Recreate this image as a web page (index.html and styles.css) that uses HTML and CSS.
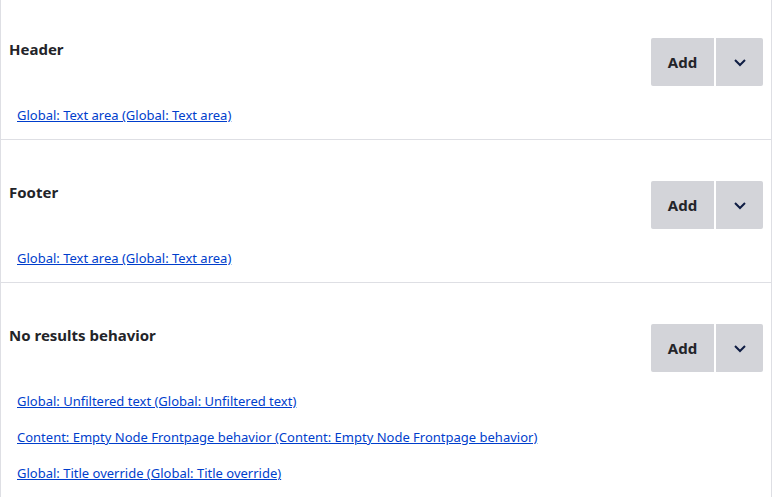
FILE: index.html
```html
<!DOCTYPE html>
<html>
<head>
<meta charset="utf-8">
<link rel="stylesheet" href="styles.css">
</head>
<body>
<div class="panel">
  <section class="sect">
    <div class="sect-head">
      <h3 class="sect-title">Header</h3>
      <div class="dropbutton">
        <button class="db-main">Add</button>
        <button class="db-toggle" aria-label="More"><svg width="14" height="9" viewBox="0 0 14 9"><path d="M2 2 L7 7 L12 2" fill="none" stroke="#0f1d44" stroke-width="2"/></svg></button>
      </div>
    </div>
    <ul class="items">
      <li><a href="#">Global: Text area (Global: Text area)</a></li>
    </ul>
  </section>
  <section class="sect">
    <div class="sect-head">
      <h3 class="sect-title">Footer</h3>
      <div class="dropbutton">
        <button class="db-main">Add</button>
        <button class="db-toggle" aria-label="More"><svg width="14" height="9" viewBox="0 0 14 9"><path d="M2 2 L7 7 L12 2" fill="none" stroke="#0f1d44" stroke-width="2"/></svg></button>
      </div>
    </div>
    <ul class="items">
      <li><a href="#">Global: Text area (Global: Text area)</a></li>
    </ul>
  </section>
  <section class="sect">
    <div class="sect-head">
      <h3 class="sect-title">No results behavior</h3>
      <div class="dropbutton">
        <button class="db-main">Add</button>
        <button class="db-toggle" aria-label="More"><svg width="14" height="9" viewBox="0 0 14 9"><path d="M2 2 L7 7 L12 2" fill="none" stroke="#0f1d44" stroke-width="2"/></svg></button>
      </div>
    </div>
    <ul class="items">
      <li><a href="#">Global: Unfiltered text (Global: Unfiltered text)</a></li>
      <li><a href="#">Content: Empty Node Frontpage behavior (Content: Empty Node Frontpage behavior)</a></li>
      <li><a href="#">Global: Title override (Global: Title override)</a></li>
    </ul>
  </section>
</div>
</body>
</html>
```
FILE: styles.css
```css
html, body {
  margin: 0;
  padding: 0;
  background: #fff;
}
body {
  font-family: "Noto Sans", "Open Sans", sans-serif;
  color: #232429;
  overflow: hidden;
}
.panel {
  margin-top: -3px;
  border-left: 1px solid #dedfe4;
  border-right: 1px solid #dedfe4;
}
.sect {
  border-bottom: 1px solid #dedfe4;
  padding: 41px 8px 15px 8px;
}
.sect-head {
  display: flex;
  justify-content: space-between;
  align-items: flex-start;
}
.sect-title {
  margin: 1px 0 0 0;
  font-size: 15px;
  line-height: 20px;
  font-weight: 700;
}
.dropbutton {
  display: flex;
  gap: 2px;
}
.dropbutton button {
  height: 48px;
  border: 0;
  background: #d3d4d9;
  color: #232429;
  font-family: inherit;
  font-size: 15px;
  font-weight: 700;
  padding: 0;
  cursor: pointer;
}
.db-main {
  width: 63px;
  border-radius: 2px 0 0 2px;
}
.db-toggle {
  width: 47px;
  border-radius: 0 2px 2px 0;
  display: flex;
  align-items: center;
  justify-content: center;
}
.items {
  list-style: none;
  margin: 20px 0 0 0;
  padding: 0 0 0 8px;
  display: flex;
  flex-direction: column;
  gap: 18px;
}
.items li {
  font-size: 13px;
  line-height: 18px;
}
.items a {
  color: #003ecc;
  text-decoration: underline;
}
```
